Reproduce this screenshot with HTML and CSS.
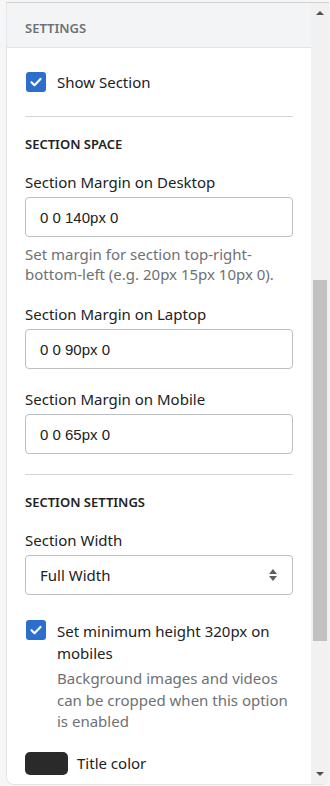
FILE: index.html
```html
<!DOCTYPE html>
<html lang="en">
<head>
    <meta charset="UTF-8">
    <meta name="viewport" content="width=device-width, initial-scale=1.0">
    <title>Section Settings</title>
    <link rel="stylesheet" href="styles.css">
</head>
<body>
    <div class="panel">
        <div class="panel-main">
            <div class="panel-header">Settings</div>
            <div class="panel-body">
                <label class="check-row first">
                    <span class="checkbox"><svg viewBox="0 0 20 20"><path d="M5.5 10.2l3 3 6-6.2" /></svg></span>
                    <span class="check-text">Show Section</span>
                </label>
                <hr class="divider">

                <div class="group-title">Section Space</div>
                <div class="field">
                    <div class="field-label">Section Margin on Desktop</div>
                    <div class="text-input">0 0 140px 0</div>
                    <div class="help">Set margin for section top-right-bottom-left (e.g. 20px 15px 10px 0).</div>
                </div>
                <div class="field">
                    <div class="field-label">Section Margin on Laptop</div>
                    <div class="text-input">0 0 90px 0</div>
                </div>
                <div class="field">
                    <div class="field-label">Section Margin on Mobile</div>
                    <div class="text-input">0 0 65px 0</div>
                </div>
                <hr class="divider">

                <div class="group-title">Section Settings</div>
                <div class="field">
                    <div class="field-label">Section Width</div>
                    <div class="text-input select">
                        <span>Full Width</span>
                        <svg class="select-arrows" viewBox="0 0 10 16"><path d="M5 2l4 5H1z M5 14l4-5H1z" /></svg>
                    </div>
                </div>
                <label class="check-row top">
                    <span class="checkbox"><svg viewBox="0 0 20 20"><path d="M5.5 10.2l3 3 6-6.2" /></svg></span>
                    <span class="check-text">
                        Set minimum height 320px on mobiles
                        <span class="help">Background images and videos can be cropped when this option is enabled</span>
                    </span>
                </label>
                <div class="color-row">
                    <span class="swatch"></span>
                    <span class="color-label">Title color</span>
                </div>
            </div>
        </div>
        <div class="scrollbar">
            <div class="scroll-arrow up"></div>
            <div class="scroll-track"><div class="scroll-thumb"></div></div>
            <div class="scroll-arrow down"></div>
        </div>
    </div>
</body>
</html>
```

FILE: styles.css
```css
body {
    margin: 0;
    background-color: #f6f6f7;
    font-family: "Noto Sans", "Open Sans", Arial, sans-serif;
    color: #202223;
}
.panel {
    display: flex;
    height: 781px;
    margin: 2px 1px 0 6px;
    background-color: #fff;
    border-top: 1px solid #d2d2d2;
    border-left: 1px solid #e4e5e7;
    border-bottom: 1px solid #e1e3e5;
    border-radius: 0 0 8px 8px;
    overflow: hidden;
}
.panel-main {
    flex: 1;
    overflow: hidden;
}
.panel-header {
    height: 45px;
    box-sizing: border-box;
    padding: 5px 0 0 18px;
    display: flex;
    align-items: center;
    background-color: #f3f4f6;
    border-bottom: 1px solid #e1e3e5;
    font-size: 13px;
    font-weight: 600;
    text-transform: uppercase;
    color: #6d7175;
}
.panel-body {
    padding: 24px 18px 0;
}
.check-row {
    display: flex;
    align-items: center;
    gap: 11px;
    font-size: 15px;
    line-height: 20px;
}
.check-row.first {
    margin-bottom: 24px;
}
.check-row.top {
    align-items: flex-start;
    margin-top: 25px;
    line-height: 22px;
}
.checkbox {
    flex: none;
    width: 20px;
    height: 20px;
    margin-left: 1px;
    border-radius: 3px;
    background-color: #2c6ecb;
    display: flex;
}
.checkbox svg {
    width: 20px;
    height: 20px;
    fill: none;
    stroke: #fff;
    stroke-width: 2.2;
    stroke-linecap: round;
    stroke-linejoin: round;
}
.divider {
    border: none;
    border-top: 1px solid #d2d5d8;
    margin: 20px 0 17px;
}
.group-title {
    font-size: 13px;
    font-weight: 600;
    text-transform: uppercase;
    line-height: 20px;
    margin-bottom: 18px;
}
.field + .field {
    margin-top: 20px;
}
.field-label {
    font-size: 15px;
    line-height: 20px;
    margin-bottom: 5px;
}
.text-input {
    height: 40px;
    box-sizing: border-box;
    border: 1px solid #babfc3;
    border-radius: 4px;
    padding: 0 14px;
    display: flex;
    align-items: center;
    font-family: "Liberation Sans", Arial, sans-serif;
    font-size: 15px;
}
.select {
    justify-content: space-between;
    font-family: "Noto Sans", "Open Sans", Arial, sans-serif;
    padding-right: 14px;
}
.select-arrows {
    width: 10px;
    height: 16px;
    fill: #5c5f62;
}
.help {
    font-size: 15px;
    line-height: 20px;
    color: #6d7175;
    margin: 7px 0 1px;
}
.check-text .help {
    display: block;
    margin: 4px 0 0;
    line-height: 21.5px;
}
.color-row {
    display: flex;
    align-items: center;
    gap: 9px;
    margin-top: 19px;
    font-size: 15px;
}
.swatch {
    width: 43px;
    height: 23px;
    border-radius: 5px;
    background-color: #2a2a2a;
}
.scrollbar {
    width: 18px;
    display: flex;
    flex-direction: column;
    align-items: center;
    background-color: #f1f1f1;
}
.scroll-arrow {
    width: 0;
    height: 0;
    border-left: 4px solid transparent;
    border-right: 4px solid transparent;
    margin: 8px 0;
}
.scroll-arrow.up {
    border-bottom: 4px solid #505050;
}
.scroll-arrow.down {
    border-top: 4px solid #505050;
}
.scroll-track {
    flex: 1;
    width: 100%;
    padding: 0 2px;
    box-sizing: border-box;
}
.scroll-thumb {
    margin-top: 257px;
    height: 361px;
    background-color: #c1c1c1;
}
```
